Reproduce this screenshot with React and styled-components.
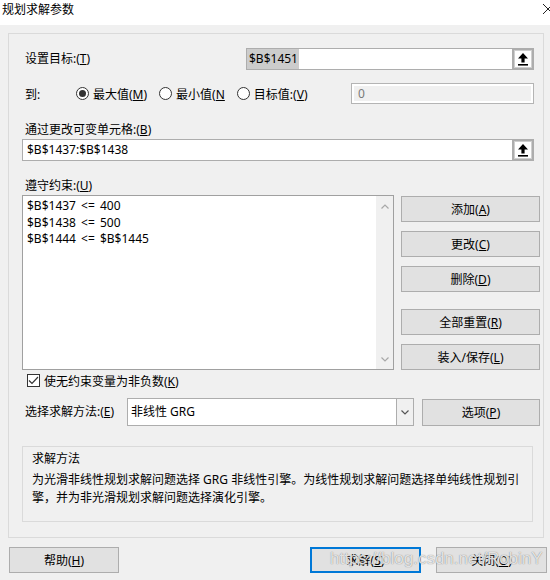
import React from 'react';
import styled, { createGlobalStyle } from 'styled-components';

const GlobalStyle = createGlobalStyle`
  body {
    margin: 0;
    background: #f0f0f0;
    font-family: "Noto Sans", "Noto Sans CJK SC", sans-serif;
    font-size: 12px;
    color: #000;
  }
  * { box-sizing: border-box; }
`;

const Window = styled.div`
  position: relative;
  width: 550px;
  height: 580px;
  overflow: hidden;
  background: #f0f0f0;
  display: flex;
  flex-direction: column;
`;

const TitleBar = styled.div`
  height: 25px;
  background: #fff;
  display: flex;
  align-items: flex-start;
  justify-content: space-between;
  padding: 2px 0 0 2px;
  line-height: 16px;
`;

const Panel = styled.div`
  margin: 8px 6px 0 8px;
  height: 505px;
  border: 1px solid #dadada;
  padding: 14px 3px 0 13px;
  display: flex;
  flex-direction: column;
`;

const FieldRow = styled.div`
  display: grid;
  grid-template-columns: 224px 1fr;
  align-items: center;
  margin-right: 6px;
`;

const Label = styled.div`
  padding-left: 3px;
  line-height: 16px;
  margin-top: ${(p) => p.$top || 0}px;
  white-space: nowrap;
`;

const RefInput = styled.div`
  height: 22px;
  border: 1px solid #adadad;
  background: #fff;
  display: flex;
  align-items: center;
  margin-top: ${(p) => p.$top || 0}px;
  margin-right: ${(p) => p.$right || 0}px;
`;

const InputText = styled.div`
  flex: 1;
  padding-left: ${(p) => (p.$selected ? 0 : 4)}px;
  line-height: 20px;
  white-space: nowrap;
`;

const Selection = styled.span`
  background: #cccccc;
  padding: 0 1px 0 2px;
  display: inline-block;
  line-height: 20px;
`;

const RefButton = styled.div`
  width: 22px;
  align-self: stretch;
  margin: -1px -1px -1px 0;
  border: 2px solid #adadad;
  box-shadow: inset 0 0 0 1px #cfcfcf;
  background: #fff;
  display: flex;
  align-items: center;
  justify-content: center;
`;

const RadioRow = styled.div`
  margin-top: 13px;
  height: 21px;
  display: flex;
  align-items: center;
  margin-right: 6px;
`;

const RadioLabel = styled.div`
  width: 54px;
  padding-left: 3px;
`;

const RadioOption = styled.div`
  display: flex;
  align-items: center;
  gap: 4px;
  margin-right: 12px;
  white-space: nowrap;
`;

const RadioCircle = styled.span`
  width: 13px;
  height: 13px;
  border-radius: 50%;
  border: 1px solid #333;
  background: #fff;
  display: flex;
  align-items: center;
  justify-content: center;
  &::after {
    content: '';
    width: 7px;
    height: 7px;
    border-radius: 50%;
    background: ${(p) => (p.$checked ? '#333' : 'transparent')};
  }
`;

const ValueBox = styled.div`
  margin-left: auto;
  width: 183px;
  height: 21px;
  border: 1px solid #b4b4b4;
  background: #f0f0f0;
  box-shadow: inset 0 0 0 2px #fff;
  padding-left: 6px;
  line-height: 19px;
  color: #7a7a7a;
`;

const ConstraintArea = styled.div`
  margin-top: 1px;
  display: grid;
  grid-template-columns: 372px 139px;
  column-gap: 7px;
  height: 173px;
`;

const ListBox = styled.div`
  border: 1px solid #a0a0a0;
  background: #fff;
  display: flex;
`;

const ListItems = styled.div`
  flex: 1;
  padding: 2px 0 0 4px;
  line-height: 16.5px;
  word-spacing: 2px;
`;

const ScrollBar = styled.div`
  width: 17px;
  background: #f0f0f0;
  display: flex;
  flex-direction: column;
  justify-content: space-between;
  align-items: center;
  padding: 8px 0 7px;
`;

const ButtonColumn = styled.div`
  display: flex;
  flex-direction: column;
  padding-top: 1px;
`;

const DialogButton = styled.div`
  height: ${(p) => p.$h || 26}px;
  width: ${(p) => (p.$w ? `${p.$w}px` : 'auto')};
  margin-top: ${(p) => p.$top || 0}px;
  margin-left: ${(p) => p.$left || 0}px;
  border: ${(p) => (p.$primary ? '2px solid #0078d7' : '1px solid #adadad')};
  background: #e1e1e1;
  display: flex;
  align-items: center;
  justify-content: center;
  white-space: nowrap;
`;

const CheckRow = styled.div`
  margin-top: 6px;
  height: 13px;
  display: flex;
  align-items: center;
  gap: 4px;
  padding-left: 5px;
  white-space: nowrap;
`;

const CheckBox = styled.span`
  width: 13px;
  height: 13px;
  border: 1px solid #333;
  background: #fff;
  display: flex;
  align-items: center;
  justify-content: center;
`;

const MethodRow = styled.div`
  margin-top: 11px;
  display: grid;
  grid-template-columns: 105px 287px 126px;
  align-items: center;
`;

const SelectBox = styled.div`
  height: 28px;
  border: 1px solid #adadad;
  background: #fff;
  display: flex;
`;

const SelectText = styled.div`
  flex: 1;
  padding-left: 3px;
  line-height: 26px;
`;

const DropButton = styled.div`
  width: 17px;
  border-left: 1px solid #adadad;
  background: #f0f0f0;
  display: flex;
  align-items: center;
  justify-content: center;
`;

const GroupBox = styled.div`
  margin-top: 20px;
  margin-right: 7px;
  height: 76px;
  border: 1px solid #dadada;
  padding: 3px 9px 0 9px;
`;

const GroupTitle = styled.div`
  line-height: 18px;
`;

const GroupText = styled.div`
  margin-top: 3px;
  line-height: 18px;
  white-space: nowrap;
`;

const BottomRow = styled.div`
  margin-top: 9px;
  display: flex;
  padding: 0 3px 0 9px;
`;

const Spacer = styled.div`
  flex: ${(p) => (p.$w ? `0 0 ${p.$w}px` : 1)};
`;

const Watermark = styled.div`
  position: absolute;
  left: 330px;
  top: 549px;
  font-family: "Liberation Sans", Arial, sans-serif;
  font-size: 17px;
  color: rgba(255, 255, 255, 0.8);
  text-shadow: 0 0 1px rgba(90, 90, 90, 0.9);
  white-space: nowrap;
  pointer-events: none;
`;

const UpArrow = () => (
  <svg width="12" height="13" viewBox="0 0 12 13">
    <polygon points="6,0 11,5.5 7.6,5.5 7.6,9.5 4.4,9.5 4.4,5.5 1,5.5" fill="#000" />
    <rect x="1" y="11" width="10" height="1.6" fill="#000" />
  </svg>
);

const Chevron = ({ up, color = '#a8a8a8' }) => (
  <svg width="8" height="5" viewBox="0 0 8 5">
    <polyline
      points={up ? '0.5,4.5 4,1 7.5,4.5' : '0.5,0.5 4,4 7.5,0.5'}
      fill="none"
      stroke={color}
      strokeWidth="1.2"
    />
  </svg>
);

const App = () => (
  <Window>
    <GlobalStyle />
    <TitleBar>
      <span>规划求解参数</span>
      <svg width="7" height="10" viewBox="0 0 7 10" style={{ marginTop: 2 }}>
        <line x1="0" y1="0" x2="10" y2="10" stroke="#222" strokeWidth="1" />
        <line x1="0" y1="10" x2="10" y2="0" stroke="#222" strokeWidth="1" />
      </svg>
    </TitleBar>

    <Panel>
      <FieldRow>
        <Label>设置目标:(<u>T</u>)</Label>
        <RefInput>
          <InputText $selected>
            <Selection>$B$1451</Selection>
          </InputText>
          <RefButton>
            <UpArrow />
          </RefButton>
        </RefInput>
      </FieldRow>

      <RadioRow>
        <RadioLabel>到:</RadioLabel>
        <RadioOption>
          <RadioCircle $checked />
          <span>最大值(<u>M</u>)</span>
        </RadioOption>
        <RadioOption>
          <RadioCircle />
          <span>最小值(<u>N</u></span>
        </RadioOption>
        <RadioOption>
          <RadioCircle />
          <span>目标值:(<u>V</u>)</span>
        </RadioOption>
        <ValueBox>0</ValueBox>
      </RadioRow>

      <Label $top={18}>通过更改可变单元格:(<u>B</u>)</Label>
      <RefInput $top={1} $right={6}>
        <InputText>$B$1437:$B$1438</InputText>
        <RefButton>
          <UpArrow />
        </RefButton>
      </RefInput>

      <Label $top={17}>遵守约束:(<u>U</u>)</Label>
      <ConstraintArea>
        <ListBox>
          <ListItems>
            <div>$B$1437 &lt;= 400</div>
            <div>$B$1438 &lt;= 500</div>
            <div>$B$1444 &lt;= $B$1445</div>
          </ListItems>
          <ScrollBar>
            <Chevron up />
            <Chevron />
          </ScrollBar>
        </ListBox>
        <ButtonColumn>
          <DialogButton>添加(<u>A</u>)</DialogButton>
          <DialogButton $top={9}>更改(<u>C</u>)</DialogButton>
          <DialogButton $top={9}>删除(<u>D</u>)</DialogButton>
          <DialogButton $top={17}>全部重置(<u>R</u>)</DialogButton>
          <DialogButton $top={9}>装入/保存(<u>L</u>)</DialogButton>
        </ButtonColumn>
      </ConstraintArea>

      <CheckRow>
        <CheckBox>
          <svg width="11" height="9" viewBox="0 0 11 9">
            <polyline points="1,4.5 4,7.5 10,1" fill="none" stroke="#333" strokeWidth="1.2" />
          </svg>
        </CheckBox>
        <span>使无约束变量为非负数(<u>K</u>)</span>
      </CheckRow>

      <MethodRow>
        <Label>选择求解方法:(<u>E</u>)</Label>
        <SelectBox>
          <SelectText>非线性 GRG</SelectText>
          <DropButton>
            <Chevron color="#555" />
          </DropButton>
        </SelectBox>
        <DialogButton $h={27} $left={8}>选项(<u>P</u>)</DialogButton>
      </MethodRow>

      <GroupBox>
        <GroupTitle>求解方法</GroupTitle>
        <GroupText>
          为光滑非线性规划求解问题选择 GRG 非线性引擎。为线性规划求解问题选择单纯线性规划引
          <br />
          擎，并为非光滑规划求解问题选择演化引擎。
        </GroupText>
      </GroupBox>
    </Panel>

    <BottomRow>
      <DialogButton $w={110}>帮助(<u>H</u>)</DialogButton>
      <Spacer />
      <DialogButton $w={111} $primary>求解(<u>S</u>)</DialogButton>
      <Spacer $w={15} />
      <DialogButton $w={111}>关闭(<u>O</u>)</DialogButton>
    </BottomRow>

    <Watermark>https://blog.csdn.net/RobinY</Watermark>
  </Window>
);

export default App;
